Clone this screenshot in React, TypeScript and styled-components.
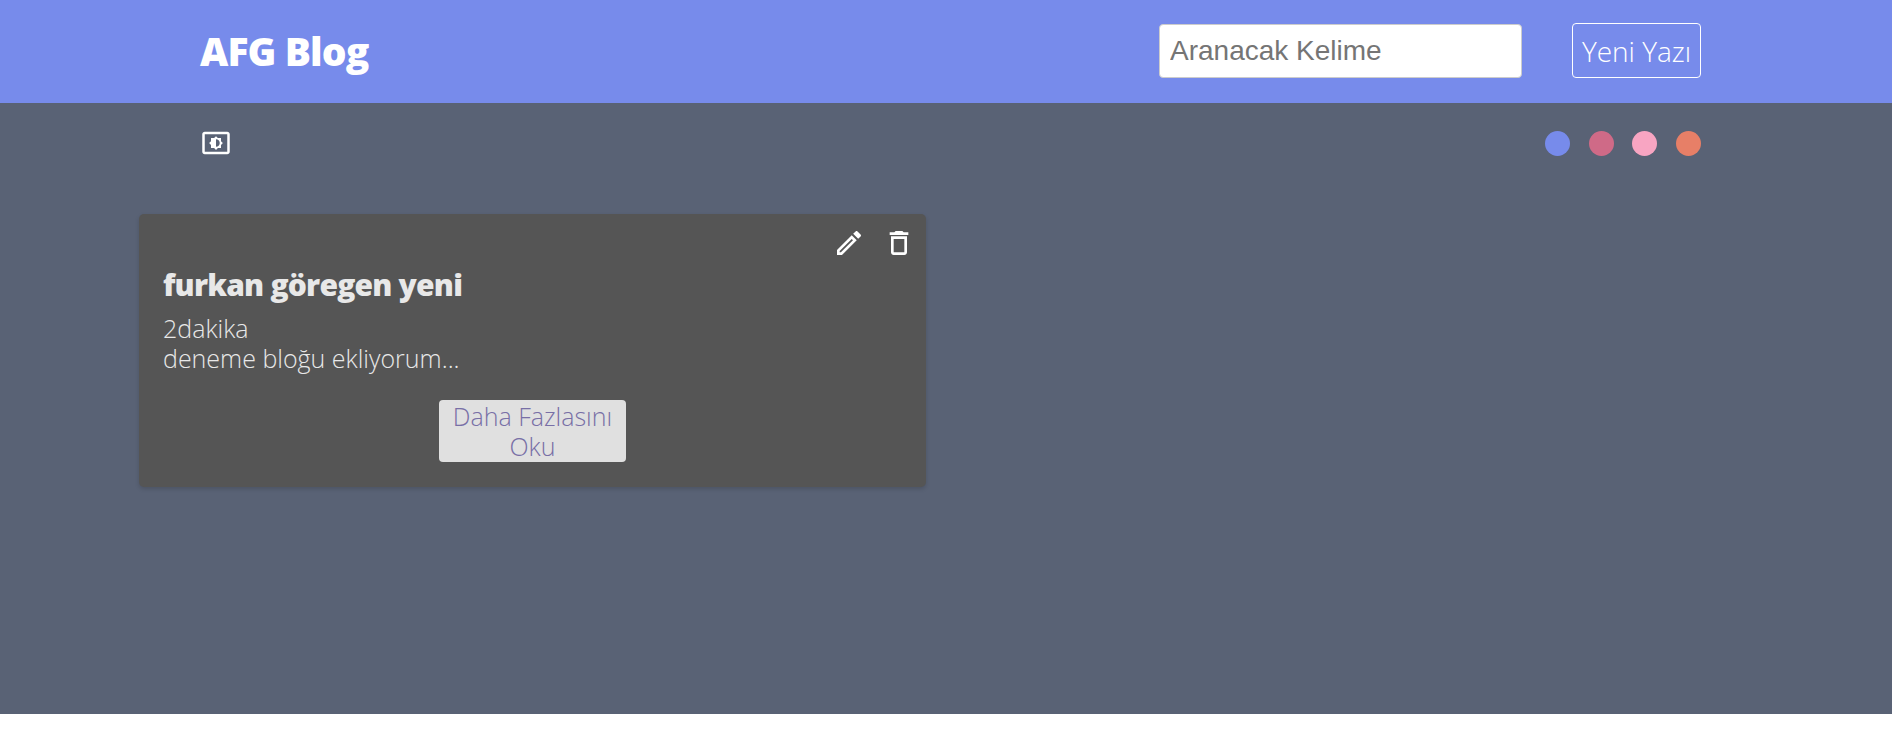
import { createGlobalStyle } from 'styled-components';
import styled from 'styled-components';
import {
  MdDeleteOutline,
  MdOutlineCreate,
  MdSettingsBrightness,
} from 'react-icons/md';

const GlobalStyle = createGlobalStyle`
  html, body {
    margin: 0;
    padding: 0;
    background-color: white;
  }
`;

const Page = styled.div`
  height: 714px;
  background-color: #596275;
  font-family: 'Open Sans', 'Liberation Sans', sans-serif;
`;

const Header = styled.header`
  display: flex;
  align-items: center;
  height: 103px;
  padding: 0 191px 0 200px;
  background-color: #778beb;
`;

const Logo = styled.h1`
  flex: 1;
  margin: 0 0 3px;
  color: white;
  font-size: 39px;
  font-weight: 800;
  letter-spacing: -0.9px;
`;

const SearchInput = styled.input`
  box-sizing: border-box;
  width: 363px;
  height: 54px;
  margin: 0 50px 1px 0;
  padding: 0 10px;
  border: 1px solid #ccc;
  border-radius: 4px;
  font-family: 'Liberation Sans', sans-serif;
  font-size: 28px;
  outline: none;
`;

const NewPostButton = styled.button`
  box-sizing: border-box;
  width: 129px;
  height: 55px;
  margin-bottom: 2px;
  padding: 0;
  border: 1px solid white;
  border-radius: 4px;
  background: transparent;
  color: white;
  font-family: inherit;
  font-size: 28px;
  font-weight: 300;
`;

const Toolbar = styled.div`
  display: flex;
  align-items: center;
  justify-content: space-between;
  height: 25px;
  margin-top: 28px;
  padding: 0 191px 0 201px;
`;

const ThemeIcon = styled(MdSettingsBrightness)`
  display: block;
  margin-top: -1px;
  color: white;
`;

const Swatches = styled.div`
  display: flex;
  gap: 18.75px;
`;

const Swatch = styled.span<{ color: string }>`
  display: block;
  width: 25px;
  height: 25px;
  border-radius: 50%;
  background-color: ${({ color }) => color};
`;

const Cards = styled.div`
  padding: 58px 0 0 139px;
`;

const Card = styled.article`
  position: relative;
  box-sizing: border-box;
  width: 787px;
  height: 273px;
  padding: 46px 24px 0;
  border-radius: 5px;
  background-color: #555;
  box-shadow: 0 2px 4px rgba(0, 0, 0, 0.15);
`;

const CardActions = styled.div`
  position: absolute;
  top: 13px;
  right: 11px;
  display: flex;
  gap: 18px;
  color: white;
`;

const CardTitle = styled.h2`
  margin: 0 0 3px;
  color: #e8e8e8;
  font-size: 30px;
  font-weight: 800;
  line-height: 50px;
  letter-spacing: -0.79px;
`;

const CardText = styled.p`
  margin: 0;
  color: #e8e8e8;
  font-size: 25px;
  font-weight: 300;
  line-height: 30px;
`;

const ReadMore = styled.button`
  display: block;
  box-sizing: border-box;
  width: 187px;
  height: 62px;
  margin: 27px auto 0;
  padding: 0;
  border: none;
  border-radius: 4px;
  background-color: #e0e0e0;
  color: #786fa6;
  font-family: inherit;
  font-size: 25px;
  font-weight: 300;
  line-height: 30px;
`;

const swatches = ['#778beb', '#cf6a87', '#f8a5c2', '#e77f67'];

export default function App() {
  return (
    <Page>
      <GlobalStyle />
      <Header>
        <Logo>AFG Blog</Logo>
        <SearchInput placeholder="Aranacak Kelime" />
        <NewPostButton>Yeni Yazı</NewPostButton>
      </Header>
      <Toolbar>
        <ThemeIcon size={30} />
        <Swatches>
          {swatches.map((color) => (
            <Swatch key={color} color={color} />
          ))}
        </Swatches>
      </Toolbar>
      <Cards>
        <Card>
          <CardActions>
            <MdOutlineCreate size={32} />
            <MdDeleteOutline size={32} />
          </CardActions>
          <CardTitle>furkan göregen yeni</CardTitle>
          <CardText>2dakika</CardText>
          <CardText>deneme bloğu ekliyorum...</CardText>
          <ReadMore>Daha Fazlasını Oku</ReadMore>
        </Card>
      </Cards>
    </Page>
  );
}
